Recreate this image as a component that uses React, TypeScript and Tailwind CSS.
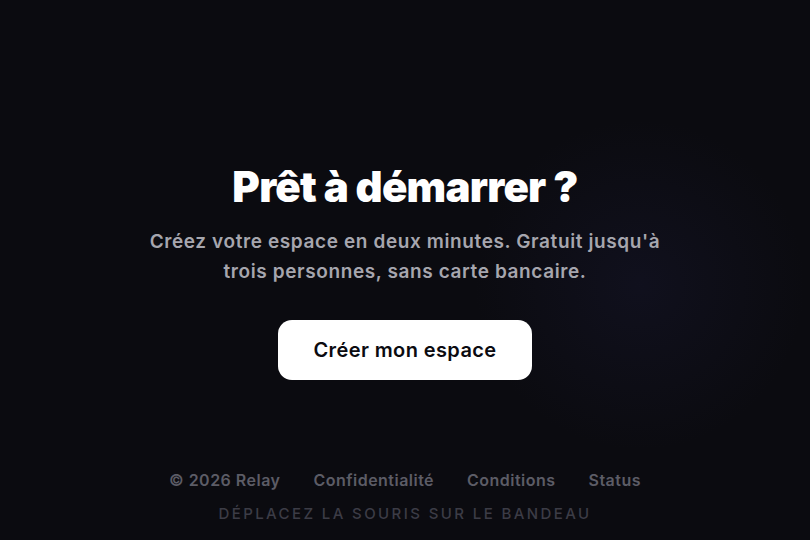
import { useState } from "react";

// CTA banner with a cursor-following glow. The glow sits where the pointer
// last was; before any movement it rests at the right of the centre.

const links = ["© 2026 Relay", "Confidentialité", "Conditions", "Status"];

export default function App() {
  const [glow, setGlow] = useState({ x: 640, y: 285 });

  return (
    <div
      className="relative flex min-h-[540px] w-full flex-col items-center overflow-hidden bg-[#0b0b10] font-['Inter','Liberation_Sans',sans-serif]"
      onMouseMove={(e) => {
        const r = e.currentTarget.getBoundingClientRect();
        setGlow({ x: e.clientX - r.left, y: e.clientY - r.top });
      }}
    >
      <div
        className="pointer-events-none absolute h-[360px] w-[360px] -translate-x-1/2 -translate-y-1/2 rounded-full bg-[radial-gradient(circle,rgba(40,40,90,0.18),transparent_65%)]"
        style={{ left: glow.x, top: glow.y }}
      />

      <section className="relative flex flex-col items-center pt-[161px] text-center">
        <h1 className="text-[42px] leading-[52px] font-black tracking-[-0.018em] text-white">
          Prêt à démarrer ?
        </h1>
        <p className="mt-[14px] max-w-[540px] text-[19px] leading-[30px] font-semibold tracking-[0.032em] text-[#a6a6ae]">
          Créez votre espace en deux minutes. Gratuit jusqu'à trois personnes, sans carte bancaire.
        </p>
        <button className="mt-[33px] h-[60px] rounded-[14px] bg-white px-[35px] text-[20px] font-semibold tracking-[0.02em] text-[#0b0b10]">
          Créer mon espace
        </button>
      </section>

      <footer className="relative mt-[88px] flex flex-col items-center gap-[12px]">
        <nav className="flex items-center gap-[33px] text-[16px] leading-6 font-semibold tracking-[0.03em] text-[#5c5c66]">
          {links.map((l) => (
            <a key={l} href="#" className="hover:text-[#8a8a94]">
              {l}
            </a>
          ))}
        </nav>
        <p className="text-[15px] leading-5 font-medium tracking-[0.16em] text-[#3c3c46] uppercase">
          Déplacez la souris sur le bandeau
        </p>
      </footer>
    </div>
  );
}
